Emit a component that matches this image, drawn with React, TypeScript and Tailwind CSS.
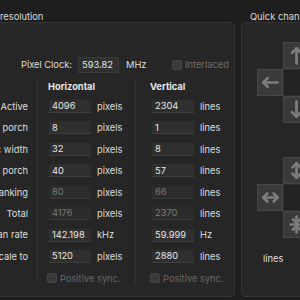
import React from "react";

const ARROW = "#7d7d7d";

function Icon({ kind }: { kind: string }) {
  const p = {
    fill: "none",
    stroke: ARROW,
    strokeWidth: 3.4,
    strokeLinecap: "round" as const,
    strokeLinejoin: "round" as const,
  };
  return (
    <svg width="19" height="19" viewBox="0 0 24 24">
      {kind === "up" && (
        <>
          <path d="M12 22V3" {...p} />
          <path d="M6.5 8.5L12 3l5.5 5.5" {...p} />
        </>
      )}
      {kind === "down" && (
        <>
          <path d="M12 2v19" {...p} />
          <path d="M6.5 15.5L12 21l5.5-5.5" {...p} />
        </>
      )}
      {kind === "left" && (
        <>
          <path d="M21 12H3" {...p} />
          <path d="M8.5 6.5L3 12l5.5 5.5" {...p} />
        </>
      )}
      {kind === "vexp" && (
        <>
          <path d="M12 3v18" {...p} />
          <path d="M7 8L12 3l5 5" {...p} />
          <path d="M7 16L12 21l5-5" {...p} />
        </>
      )}
      {kind === "hexp" && (
        <>
          <path d="M3 12h18" {...p} />
          <path d="M8 7L3 12l5 5" {...p} />
          <path d="M16 7L21 12l-5 5" {...p} />
        </>
      )}
      {kind === "vcol" && (
        <>
          <path d="M12 2v8" {...p} />
          <path d="M7.5 5.5L12 10l4.5-4.5" {...p} />
          <path d="M12 22v-8" {...p} />
          <path d="M7.5 18.5L12 14l4.5 4.5" {...p} />
          <path d="M5 12h14" {...p} />
        </>
      )}
    </svg>
  );
}

function Btn({ kind }: { kind: string }) {
  return (
    <div className="w-[26px] h-[27px] border border-[#474747] bg-[#3a3a3a] flex items-center justify-center">
      <Icon kind={kind} />
    </div>
  );
}

function Empty() {
  return <div className="w-[26px] h-[27px]" />;
}

function Center() {
  return <div className="w-[26px] h-[27px] bg-[#222222] border border-[#2e2e2e]" />;
}

function Field({ v, dim }: { v: string; dim?: boolean }) {
  return (
    <div
      className={
        dim
          ? "h-[13px] w-[42px] bg-[#2c2c2c] border-b border-[#383838] pl-[3px] flex items-center leading-none text-[#7a7a7a]"
          : "h-[13px] w-[42px] bg-[#2f2f2f] border-b border-[#3e3e3e] pl-[3px] flex items-center leading-none text-[#e6e6e6]"
      }
    >
      {v}
    </div>
  );
}

const labels = ["Active", "porch", "c width", "t porch", "anking", "Total", "an rate", "cale to"];
const hv: [string, boolean, string][] = [
  ["4096", false, "pixels"],
  ["8", false, "pixels"],
  ["32", false, "pixels"],
  ["40", false, "pixels"],
  ["80", true, "pixels"],
  ["4176", true, "pixels"],
  ["142.198", false, "kHz"],
  ["5120", false, "pixels"],
];
const vv: [string, boolean, string][] = [
  ["2304", false, "lines"],
  ["1", false, "lines"],
  ["8", false, "lines"],
  ["57", false, "lines"],
  ["66", true, "lines"],
  ["2370", true, "lines"],
  ["59.999", false, "Hz"],
  ["2880", false, "lines"],
];

function Check() {
  return <div className="w-[10px] h-[10px] shrink-0 rounded-[2px] bg-[#3a3a3a] border border-[#444444]" />;
}

export default function App() {
  return (
    <div className="w-[300px] h-[300px] overflow-hidden bg-[#1e1e1e] font-[Inter,sans-serif] text-[9.3px] text-[#dedede]">
      <div className="h-[22px] flex pt-[10px] leading-[13px] text-[#d8d8d8]">
        <div className="w-[250px] shrink-0">resolution</div>
        <div className="whitespace-nowrap">Quick change</div>
      </div>
      <div className="flex">
        <div className="w-[235px] h-[275px] shrink-0 border-t border-r border-b border-[#343434] rounded-r-[5px] bg-[#262626] pt-[34px]">
          <div className="flex items-center h-[16px]">
            <div className="w-[72px] shrink-0 text-right whitespace-nowrap">Pixel Clock:</div>
            <div className="ml-[6px] w-[41px] shrink-0 h-[16px] bg-[#2f2f2f] border border-[#3a3a3a] pl-[3px] flex items-center text-[#e6e6e6]">
              593.82
            </div>
            <div className="ml-[7px] w-[46px] shrink-0">MHz</div>
            <Check />
            <div className="ml-[3px] text-[#6e6e6e]">Interlaced</div>
          </div>
          <div className="flex mt-[7px]">
            <div className="w-[28px] mr-[9px] shrink-0">
              <div className="h-[20px]" />
              {labels.map((l) => (
                <div key={l} className="h-[21.43px]">
                  <div className="h-[13px] flex items-center justify-end whitespace-nowrap leading-none">{l}</div>
                </div>
              ))}
            </div>
            <div className="w-[98px] shrink-0 border-l border-[#333333] pl-[11px] h-[203px]">
              <div className="h-[20px] font-bold leading-[14px] ml-[-1px] text-[#e8e8e8]">Horizontal</div>
              {hv.map(([v, d, u], i) => (
                <div key={i} className="h-[21.43px] flex items-start">
                  <Field v={v} dim={d} />
                  <div className="ml-[6px] h-[13px] flex items-center leading-none">{u}</div>
                </div>
              ))}
              <div className="flex items-center h-[10px] mt-[2px] ml-[-2px]">
                <Check />
                <div className="ml-[3px] text-[#666666] leading-none whitespace-nowrap">Positive sync.</div>
              </div>
            </div>
            <div className="flex-1 border-l border-[#333333] pl-[16px] h-[203px]">
              <div className="h-[20px] font-bold leading-[14px] ml-[-2px] text-[#e8e8e8]">Vertical</div>
              {vv.map(([v, d, u], i) => (
                <div key={i} className="h-[21.43px] flex items-start">
                  <Field v={v} dim={d} />
                  <div className="ml-[6px] h-[13px] flex items-center leading-none">{u}</div>
                </div>
              ))}
              <div className="flex items-center h-[10px] mt-[2px] ml-[-2px]">
                <Check />
                <div className="ml-[3px] text-[#666666] leading-none whitespace-nowrap">Positive sync.</div>
              </div>
            </div>
          </div>
        </div>
        <div className="ml-[6px] w-[80px] h-[275px] shrink-0 border border-[#343434] rounded-[5px] bg-[#262626] pt-[19px] pl-[15px]">
          <div className="grid grid-cols-[26px_26px_26px]">
            <Empty />
            <Btn kind="up" />
            <Empty />
            <Btn kind="left" />
            <Center />
            <Empty />
            <Empty />
            <Btn kind="down" />
            <Empty />
          </div>
          <div className="grid grid-cols-[26px_26px_26px] mt-[34px]">
            <Empty />
            <Btn kind="vexp" />
            <Empty />
            <Btn kind="hexp" />
            <Center />
            <Empty />
            <Empty />
            <Btn kind="vcol" />
            <Empty />
          </div>
          <div className="mt-[15px] pl-[6px] leading-[12px]">lines</div>
        </div>
      </div>
    </div>
  );
}
